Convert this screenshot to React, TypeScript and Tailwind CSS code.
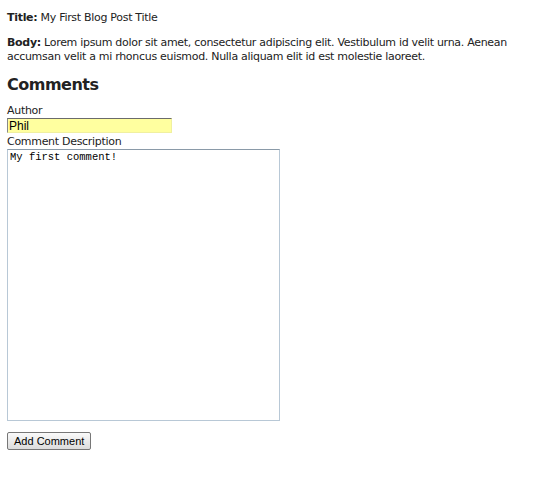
export default function App() {
  return (
    <div className="min-h-[487px] bg-white px-[7px] pt-[11px] font-['DejaVu_Sans',Verdana,sans-serif] text-[11px] leading-[14px] tracking-[-0.3px] text-[#222]">
      <p>
        <b>Title:</b> My First Blog Post Title
      </p>
      <p className="mt-[11px]">
        <b>Body:</b> Lorem ipsum dolor sit amet, consectetur adipiscing elit. Vestibulum id velit urna. Aenean
        accumsan velit a mi rhoncus euismod. Nulla aliquam elit id est molestie laoreet.
      </p>
      <h2 className="mt-[10px] text-[16px] font-bold leading-[22px] tracking-[-0.5px]">Comments</h2>
      <form className="mt-[8px] flex flex-col items-start">
        <label className="leading-[14px]">Author</label>
        <input
          defaultValue="Phil"
          className="h-[15px] w-[165px] border border-t-[#6b6b6b] border-l-[#888] border-r-[#f0f0a0] border-b-[#f0f0a0] bg-[#ffff9f] px-[1px] font-['Liberation_Sans',Arial,sans-serif] text-[12px] leading-[13px] tracking-normal text-black outline-none"
        />
        <label className="mt-[2px] leading-[14px]">Comment Description</label>
        <textarea
          defaultValue="My first comment!"
          className="h-[272px] w-[273px] resize-none border border-[#b8c8d6] border-t-[#8a9aa8] px-[2px] py-[1px] font-['Liberation_Mono','Courier_New',monospace] text-[10.5px] leading-[13px] tracking-normal text-black outline-none"
        />
        <button
          type="button"
          className="mt-[11px] h-[18px] rounded-[2px] border border-[#777] bg-gradient-to-b from-[#fafafa] to-[#dcdcdc] px-[6px] font-['Liberation_Sans',Arial,sans-serif] text-[11px] leading-[16px] tracking-normal text-black"
        >
          Add Comment
        </button>
      </form>
    </div>
  );
}
